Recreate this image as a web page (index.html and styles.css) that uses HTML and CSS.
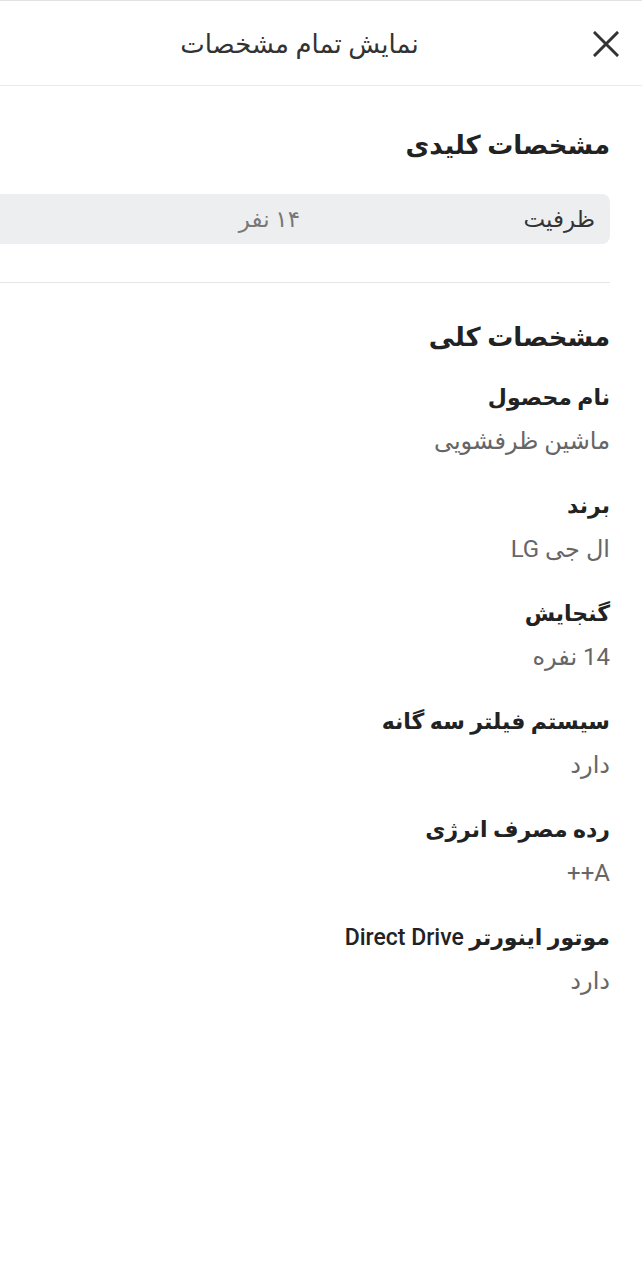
FILE: index.html
```html
<!DOCTYPE html>
<html lang="fa" dir="rtl">
<head>
<meta charset="utf-8">
<title>نمایش تمام مشخصات</title>
<link rel="stylesheet" href="styles.css">
</head>
<body>
<div class="page">
  <header class="topbar">
    <button class="close" aria-label="بستن">
      <svg width="26" height="26" viewBox="0 0 26 26"><path d="M2 2 L24 24 M24 2 L2 24" stroke="#333" stroke-width="3" stroke-linecap="square" fill="none"/></svg>
    </button>
    <div class="title">نمایش تمام مشخصات</div>
  </header>
  <main class="content">
    <section class="key">
      <h2 class="sec-title">مشخصات کلیدی</h2>
      <div class="key-row">
        <div class="key-label">ظرفیت</div>
        <div class="key-value">۱۴ نفر</div>
      </div>
    </section>
    <hr class="divider">
    <section class="general">
      <h2 class="sec-title">مشخصات کلی</h2>
      <div class="spec"><div class="spec-label">نام محصول</div><div class="spec-value">ماشین ظرفشویی</div></div>
      <div class="spec"><div class="spec-label">برند</div><div class="spec-value">ال جی LG</div></div>
      <div class="spec"><div class="spec-label">گنجایش</div><div class="spec-value">14 نفره</div></div>
      <div class="spec"><div class="spec-label">سیستم فیلتر سه گانه</div><div class="spec-value">دارد</div></div>
      <div class="spec"><div class="spec-label">رده مصرف انرژی</div><div class="spec-value">A++</div></div>
      <div class="spec"><div class="spec-label">موتور اینورتر <span class="latin">Direct Drive</span></div><div class="spec-value">دارد</div></div>
    </section>
  </main>
</div>
</body>
</html>
```
FILE: styles.css
```css
html, body {
  margin: 0;
  padding: 0;
  background: #fff;
}
body {
  font-family: Roboto, "DejaVu Sans", sans-serif;
  color: #222;
  overflow-x: hidden;
}
.page {
  border-top: 1px solid #e2e2e2;
}
.topbar {
  height: 85px;
  border-bottom: 1px solid #ececec;
  display: flex;
  align-items: center;
  padding-right: 23px;
  padding-top: 2px;
  box-sizing: border-box;
}
.close {
  background: none;
  border: 0;
  padding: 0;
  width: 26px;
  height: 26px;
  display: flex;
  cursor: pointer;
  flex: none;
}
.title {
  flex: 1;
  text-align: center;
  font-size: 26px;
  line-height: 36px;
  color: #333;
  margin-left: 6px;
}
.content {
  padding-right: 32px;
  margin-left: -20px;
}
.sec-title {
  margin: 0;
  font-size: 26px;
  line-height: 36px;
  font-weight: bold;
  color: #222;
}
.key {
  padding-top: 41px;
}
.key-row {
  margin-top: 31px;
  height: 50px;
  background: #eceef0;
  border-radius: 0 8px 8px 0;
  display: flex;
  align-items: center;
}
.key-label {
  width: 295px;
  padding-right: 15px;
  font-size: 23px;
  color: #333;
  flex: none;
}
.key-value {
  font-size: 23px;
  color: #777;
}
.divider {
  border: 0;
  border-top: 1px solid #e4e4e4;
  margin: 38px 0 0 0;
}
.general {
  padding-top: 36px;
}
.spec {
  margin-top: 27px;
}
.spec + .spec {
  margin-top: 33px;
}
.spec-label {
  font-size: 22px;
  font-weight: bold;
  color: #222;
  line-height: 32px;
}
.latin {
  font-size: 23px;
  font-weight: 500;
}
.spec-value {
  font-size: 24px;
  color: #666;
  line-height: 32px;
  margin-top: 11px;
}
```
